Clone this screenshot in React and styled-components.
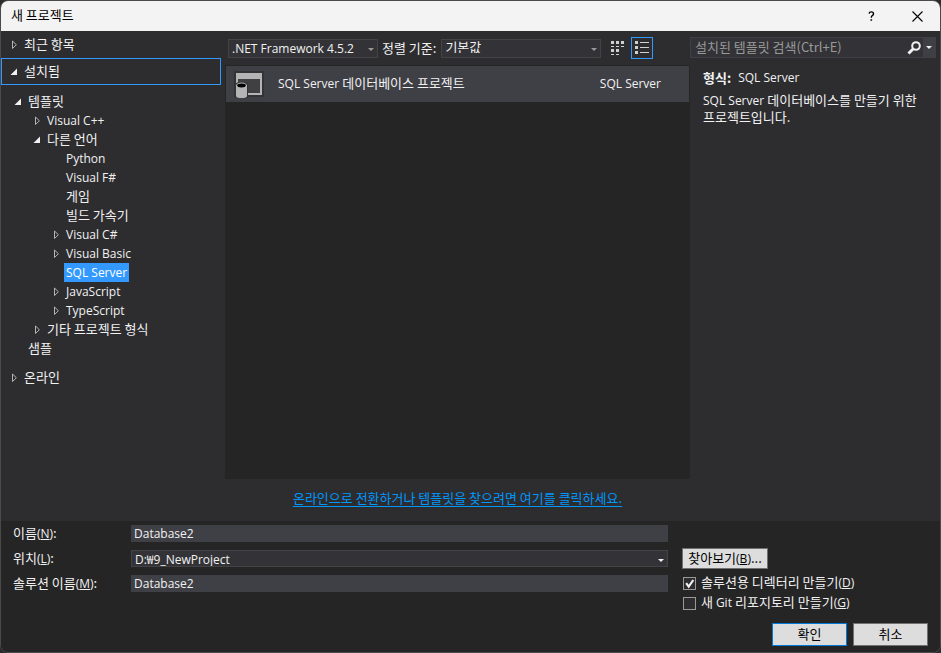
import React, { useState } from "react";
import styled, { createGlobalStyle, css } from "styled-components";

const latin = '"Open Sans", "Noto Sans CJK KR", sans-serif';
const korean = '"Noto Sans CJK KR", "Open Sans", sans-serif';

const GlobalStyle = createGlobalStyle`
  *, *::before, *::after { box-sizing: border-box; }
  body { margin: 0; background: #2b2a2c; }
  button, input, select { font: inherit; color: inherit; margin: 0; }
`;

/* ---------- window frame ---------- */

const Dialog = styled.main`
  display: flex;
  flex-direction: column;
  min-height: 100vh;
  border: 1px solid #4a494c;
  border-radius: 8px;
  overflow: hidden;
  background: #2d2d30;
  color: #f1f1f1;
  font: 13px/19px ${korean};
`;

const TitleBar = styled.header`
  display: flex;
  align-items: center;
  flex: none;
  height: 30px;
  padding-left: 10px;
  background: #f3f3f3;
  color: #000;
`;

const Title = styled.h1`
  flex: 1;
  margin: 0;
  padding-bottom: 4px;
  font-size: 13px;
  font-weight: 400;
`;

const CaptionButton = styled.button`
  display: grid;
  place-items: center;
  width: 46px;
  height: 30px;
  padding: 0;
  border: 0;
  background: transparent;
`;

const Latin = styled.span`
  font-family: ${latin};
  font-size: 12px;
`;

const Content = styled.div`
  display: grid;
  grid-template-columns: 224px minmax(0, 1fr) 250px;
  flex: 1;
`;

/* ---------- template tree ---------- */

const Sidebar = styled.nav`
  padding-right: 4px;
`;

const SectionRow = styled.button`
  display: flex;
  align-items: center;
  width: 100%;
  height: 27px;
  padding: 0 0 0 4px;
  border: 1px solid ${(p) => (p.$current ? "#3399ff" : "transparent")};
  background: transparent;
  text-align: left;
`;

const SectionLabel = styled.span`
  padding: 0 0 2px 2px;
`;

const Tree = styled.div`
  padding: 7px 0 6px;
`;

const TreeRow = styled.button`
  display: flex;
  align-items: center;
  width: 100%;
  height: 19px;
  padding: 0 0 0 ${(p) => 9 + p.$level * 19}px;
  border: 0;
  background: transparent;
  text-align: left;
`;

const TreeLabel = styled.span`
  height: 19px;
  padding: 0 2px;
  line-height: 17px;
  white-space: nowrap;
  ${(p) => p.$latin && css`font: 12px/20px ${latin};`}
  ${(p) => p.$selected && css`background: #3399ff; color: #fff;`}
`;

const ArrowSlot = styled.svg`
  flex: none;
  width: 16px;
  height: 16px;
`;

function Arrow({ state }) {
  return (
    <ArrowSlot viewBox="0 0 16 16" aria-hidden="true">
      {state === "open" && <path d="M11 4.500v6.500H4.500z" fill="#f1f1f1" />}
      {state === "closed" && (
        <path d="M6.500 4v7.500l3.900-3.750z" fill="none" stroke="#b4b4b4" />
      )}
    </ArrowSlot>
  );
}

/* ---------- template list ---------- */

const Center = styled.section`
  display: flex;
  flex-direction: column;
`;

const Toolbar = styled.div`
  display: flex;
  align-items: center;
  height: 34px;
  padding: 0 37px 0 3px;
`;

const ComboWrap = styled.div`
  position: relative;
  flex: ${(p) => (p.$grow ? `0 1 ${p.$grow}px` : "1")};
  min-width: 0;
  height: ${(p) => p.$height}px;
`;

const Combo = styled.select`
  display: block;
  appearance: none;
  width: 100%;
  height: 100%;
  padding: ${(p) => (p.$latin ? "0 16px 0 3px" : "0 16px 4px 3px")};
  border: 1px solid #434346;
  border-radius: 0;
  background: #333337;
  font: ${(p) => (p.$latin ? `12px ${latin}` : `13px/13px ${korean}`)};
`;

const ComboArrow = styled.svg`
  position: absolute;
  right: 4px;
  top: 50%;
  width: 6px;
  height: 3px;
  fill: ${(p) => p.$color};
  pointer-events: none;
`;

function ComboBox({ id, label, value, height, grow, latinText, arrow = "#999999" }) {
  return (
    <ComboWrap $height={height} $grow={grow}>
      <Combo id={id} aria-label={label} $latin={latinText} defaultValue={value}>
        <option>{value}</option>
      </Combo>
      <ComboArrow viewBox="0 0 6 3" $color={arrow} aria-hidden="true">
        <path d="M0 0h6L3 3z" />
      </ComboArrow>
    </ComboWrap>
  );
}

const SortLabel = styled.label`
  padding: 0 5px 2px 4px;
  white-space: nowrap;
`;

const ViewButton = styled.button`
  display: grid;
  place-items: center;
  flex: none;
  width: 22px;
  height: 22px;
  margin-left: ${(p) => p.$gap}px;
  padding: 0;
  border: 1px solid ${(p) => (p.$active ? "#3399ff" : "transparent")};
  background: transparent;
  fill: #d0d0d0;
`;

const TemplateList = styled.ul`
  flex: 1;
  margin: 0;
  padding: 1px 1px 0;
  background: #252526;
  list-style: none;
`;

const TemplateItem = styled.li`
  display: flex;
  align-items: center;
  height: 36px;
  padding: 0 28px 0 8px;
  background: #3f3f46;
`;

const TemplateName = styled.span`
  flex: 1;
  padding: 0 0 2px 14px;
`;

const TemplateKind = styled(Latin)`
  padding-bottom: 2px;
`;

const OnlineBar = styled.div`
  display: flex;
  justify-content: center;
  align-items: center;
  height: 42px;
  padding-bottom: 6px;
`;

const OnlineLink = styled.a`
  color: #0097fb;
  text-underline-offset: 3px;
`;

/* ---------- details ---------- */

const Details = styled.aside`
  padding: 6px 4px 0 0;
`;

const SearchBox = styled.div`
  display: flex;
  height: 21px;
  border: 1px solid #3f3f46;
  background: #333337;
`;

const SearchInput = styled.input`
  flex: 1;
  min-width: 0;
  padding: 0 4px 2px;
  border: 0;
  background: transparent;
  font-size: 13px;
  &::placeholder { color: #999999; opacity: 1; }
`;

const SearchButton = styled.button`
  display: grid;
  place-items: center;
  width: ${(p) => p.$width}px;
  padding: 0;
  border: 0;
  background: ${(p) => (p.$raised ? "#3f3f46" : "transparent")};
`;

const Description = styled.div`
  padding: 10px 4px 0 13px;
`;

const TypeLine = styled.p`
  display: flex;
  gap: 7px;
  margin: 0 0 5px;
`;

const Summary = styled.p`
  margin: 0;
  line-height: 16px;
  word-break: keep-all;
`;

/* ---------- project form ---------- */

const Footer = styled.form`
  display: grid;
  grid-template-columns: minmax(0, 1fr) 258px;
  column-gap: 14px;
  flex: none;
  background: #252526;
`;

const Fields = styled.div`
  display: grid;
  grid-template-columns: 118px minmax(0, 1fr);
  grid-auto-rows: 17px;
  row-gap: 8px;
  align-items: center;
  padding: 4px 0 0 12px;
`;

const FieldLabel = styled.label`
  padding-bottom: 2px;
`;

const TextBox = styled.input`
  width: 100%;
  height: 17px;
  padding: 0 3px;
  border: 0;
  background: #3f3f46;
  font: 12px ${latin};
`;

const Actions = styled.div`
  display: flex;
  flex-direction: column;
  align-items: flex-start;
  padding: 27px 12px 6px 0;
`;

const PushButton = styled.button`
  width: ${(p) => p.$width}px;
  height: ${(p) => p.$height}px;
  padding: 0 0 2px;
  border: 1px solid ${(p) => (p.$primary ? "#0078d7" : "#707070")};
  background: #dddddd;
  color: #000;
  line-height: 17px;
`;

const Options = styled.div`
  display: grid;
  grid-auto-rows: 13px;
  row-gap: 7px;
  padding: 8px 0 13px 1px;
`;

const OptionLabel = styled.label`
  display: flex;
  align-items: center;
  gap: 5px;
  white-space: nowrap;
`;

const OptionText = styled.span`
  padding-bottom: 3px;
`;

const TickWrap = styled.span`
  position: relative;
  flex: none;
  width: 13px;
  height: 13px;
`;

const TickInput = styled.input`
  display: block;
  appearance: none;
  width: 13px;
  height: 13px;
  border: 1px solid #999999;
  background: #2d2d30;
`;

const TickMark = styled.svg`
  position: absolute;
  inset: 0;
  width: 13px;
  height: 13px;
  pointer-events: none;
`;

const ButtonRow = styled.div`
  display: flex;
  gap: 6px;
  align-self: flex-end;
`;

function Option({ initial, children }) {
  const [on, setOn] = useState(initial);
  return (
    <OptionLabel>
      <TickWrap>
        <TickInput type="checkbox" checked={on} onChange={() => setOn(!on)} />
        {on && (
          <TickMark viewBox="0 0 13 13" aria-hidden="true">
            <path d="M3.200 6.200l2.500 3.500L10.300 3" fill="none" stroke="#f1f1f1" strokeWidth="2.200" />
          </TickMark>
        )}
      </TickWrap>
      <OptionText>{children}</OptionText>
    </OptionLabel>
  );
}

function Key({ children }) {
  return <Latin>(<u>{children}</u>)</Latin>;
}

const tree = [
  { level: 0, arrow: "open", text: "템플릿" },
  { level: 1, arrow: "closed", text: "Visual C++", latin: true },
  { level: 1, arrow: "open", text: "다른 언어" },
  { level: 2, text: "Python", latin: true },
  { level: 2, text: "Visual F#", latin: true },
  { level: 2, text: "게임" },
  { level: 2, text: "빌드 가속기" },
  { level: 2, arrow: "closed", text: "Visual C#", latin: true },
  { level: 2, arrow: "closed", text: "Visual Basic", latin: true },
  { level: 2, text: "SQL Server", latin: true, selected: true },
  { level: 2, arrow: "closed", text: "JavaScript", latin: true },
  { level: 2, arrow: "closed", text: "TypeScript", latin: true },
  { level: 1, arrow: "closed", text: "기타 프로젝트 형식" },
  { level: 0, text: "샘플" },
];

export default function App() {
  return (
    <>
      <GlobalStyle />
      <Dialog>
        <TitleBar>
          <Title>새 프로젝트</Title>
          <CaptionButton aria-label="도움말">
            <svg width="8" height="10" viewBox="0 0 8 10" aria-hidden="true">
              <path d="M2.100 2.600Q2.300.9 4.300.9 6.500.9 6.500 2.800 6.500 4 5.300 4.700 4.300 5.300 4.300 6.700" fill="none" stroke="#000" strokeWidth="1.400" />
              <path d="M3.500 8.200h1.600v1.600H3.500z" />
            </svg>
          </CaptionButton>
          <CaptionButton aria-label="닫기">
            <svg width="11" height="11" viewBox="0 0 11 11" aria-hidden="true">
              <path d="M.5.5l10 10M10.500.5l-10 10" stroke="#000" strokeWidth="1.100" />
            </svg>
          </CaptionButton>
        </TitleBar>

        <Content>
          <Sidebar aria-label="템플릿 범주">
            <SectionRow><Arrow state="closed" /><SectionLabel>최근 항목</SectionLabel></SectionRow>
            <SectionRow $current><Arrow state="open" /><SectionLabel>설치됨</SectionLabel></SectionRow>
            <Tree>
              {tree.map((n) => (
                <TreeRow key={n.text} $level={n.level}>
                  <Arrow state={n.arrow} />
                  <TreeLabel $latin={n.latin} $selected={n.selected}>{n.text}</TreeLabel>
                </TreeRow>
              ))}
            </Tree>
            <SectionRow><Arrow state="closed" /><SectionLabel>온라인</SectionLabel></SectionRow>
          </Sidebar>

          <Center>
            <Toolbar>
              <ComboBox label="프레임워크" value=".NET Framework 4.5.2" height={19} grow={150} latinText />
              <SortLabel htmlFor="sort">정렬 기준:</SortLabel>
              <ComboBox id="sort" value="기본값" height={19} />
              <ViewButton $gap={6} aria-label="작은 아이콘">
                <svg width="14" height="14" viewBox="0 0 14 14" aria-hidden="true">
                  <path d="M0 0h3v3H0zM5 0h3v3H5zM10 0h3v3h-3zM0 5h3v1H0zM5 5h3v1H5zM10 5h3v1h-3zM0 8h3v3H0zM5 8h3v3H5zM0 13h3v1H0zM5 13h3v1H5z" />
                </svg>
              </ViewButton>
              <ViewButton $gap={2} $active aria-label="목록">
                <svg width="14" height="14" viewBox="0 0 14 14" aria-hidden="true">
                  <path d="M0 0h3v3H0zM0 5h3v3H0zM0 10h3v3H0zM5 1h9v1H5zM5 6h9v1H5zM5 11h9v1H5z" />
                </svg>
              </ViewButton>
            </Toolbar>
            <TemplateList>
              <TemplateItem>
                <svg width="30" height="28" viewBox="0 0 30 28" aria-hidden="true">
                  <path d="M0 1h30v26H0z" fill="#333337" />
                  <path d="M2 3h26v22H2z" fill="#b4b4b4" />
                  <path d="M4 9h22v14H4z" fill="#404042" />
                  <path d="M1 15q0-3 6.500-3t6.500 3v13H1z" fill="#333337" />
                  <path d="M2 15h11v11q0 2-5.500 2T2 26z" fill="#b4b4b4" />
                  <ellipse cx="7.500" cy="15.500" rx="5.500" ry="2.900" fill="#b4b4b4" />
                  <ellipse cx="7.500" cy="15.500" rx="4.300" ry="1.900" fill="#000" />
                </svg>
                <TemplateName><Latin>SQL Server </Latin>데이터베이스 프로젝트</TemplateName>
                <TemplateKind>SQL Server</TemplateKind>
              </TemplateItem>
            </TemplateList>
            <OnlineBar>
              <OnlineLink href="#online">온라인으로 전환하거나 템플릿을 찾으려면 여기를 클릭하세요.</OnlineLink>
            </OnlineBar>
          </Center>

          <Details>
            <SearchBox role="search">
              <SearchInput aria-label="설치된 템플릿 검색" placeholder="설치된 템플릿 검색(Ctrl+E)" />
              <SearchButton $width={18} aria-label="검색">
                <svg width="14" height="14" viewBox="0 0 14 14" aria-hidden="true">
                  <circle cx="9" cy="5" r="3.800" fill="none" stroke="#f1f1f1" strokeWidth="2" />
                  <path d="M6.300 7.700l-4.800 4.800" stroke="#f1f1f1" strokeWidth="3" />
                </svg>
              </SearchButton>
              <SearchButton $width={12} $raised aria-label="검색 옵션">
                <svg width="6" height="3" viewBox="0 0 6 3" aria-hidden="true">
                  <path d="M0 0h6L3 3z" fill="#f1f1f1" />
                </svg>
              </SearchButton>
            </SearchBox>
            <Description>
              <TypeLine><b>형식:</b><Latin>SQL Server</Latin></TypeLine>
              <Summary><Latin>SQL Server </Latin>데이터베이스를 만들기 위한 프로젝트입니다.</Summary>
            </Description>
          </Details>
        </Content>

        <Footer onSubmit={(e) => e.preventDefault()}>
          <Fields>
            <FieldLabel htmlFor="name">이름<Key>N</Key>:</FieldLabel>
            <TextBox id="name" defaultValue="Database2" />
            <FieldLabel htmlFor="location">위치<Key>L</Key>:</FieldLabel>
            <ComboBox id="location" value="D:₩9_NewProject" height={17} latinText arrow="#f1f1f1" />
            <FieldLabel htmlFor="solution">솔루션 이름<Key>M</Key>:</FieldLabel>
            <TextBox id="solution" defaultValue="Database2" />
          </Fields>
          <Actions>
            <PushButton type="button" $width={86} $height={21}>찾아보기<Key>B</Key>...</PushButton>
            <Options>
              <Option initial>솔루션용 디렉터리 만들기<Key>D</Key></Option>
              <Option initial={false}>새 <Latin>Git </Latin>리포지토리 만들기<Key>G</Key></Option>
            </Options>
            <ButtonRow>
              <PushButton $primary $width={75} $height={23}>확인</PushButton>
              <PushButton type="button" $width={75} $height={23}>취소</PushButton>
            </ButtonRow>
          </Actions>
        </Footer>
      </Dialog>
    </>
  );
}
